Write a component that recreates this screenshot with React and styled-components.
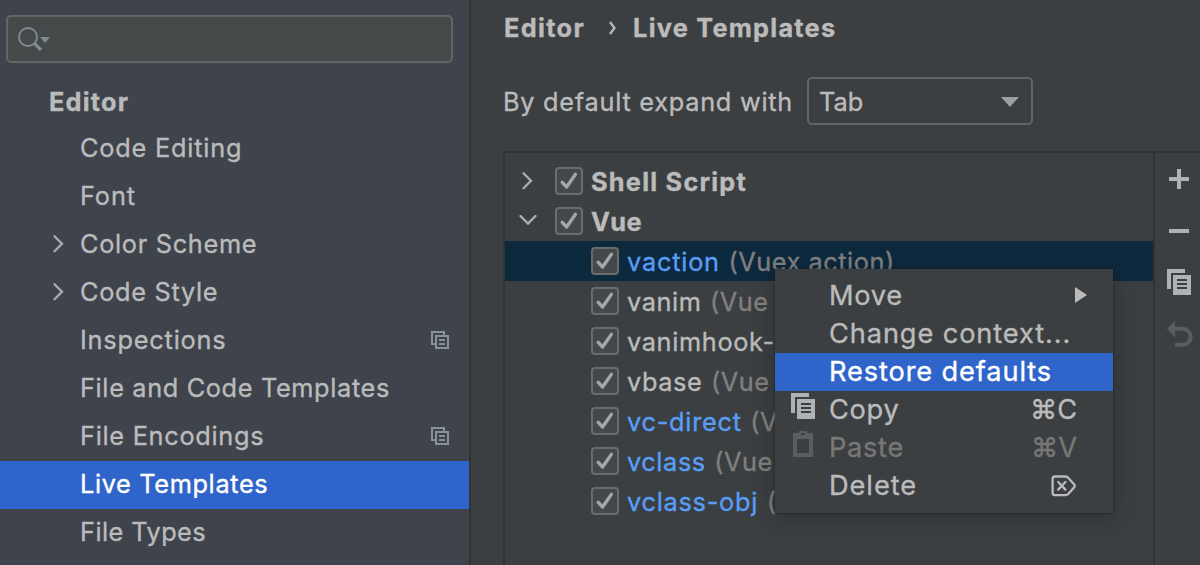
import React from "react";
import styled, { createGlobalStyle } from "styled-components";

const GlobalStyle = createGlobalStyle`
  * { box-sizing: border-box; }
  body {
    margin: 0;
    overflow: hidden;
    background: #3c3f41;
    color: #bbbbbb;
    font: 400 25.3px/1 Inter, "Liberation Sans", sans-serif;
    -webkit-text-stroke: 0.35px currentColor;
    white-space: nowrap;
  }
  svg { display: block; flex: none; }
`;

const Window = styled.div`
  display: flex;
  width: 1200px;
  height: 565px;
  overflow: hidden;
`;

const Sidebar = styled.aside`
  flex: none;
  width: 471px;
  background: #3f434c;
  border-right: 2px solid #323232;
  padding-top: 15px;
`;

const SearchField = styled.div`
  width: 447px;
  height: 48px;
  margin: 0 0 16px 6px;
  padding: 10px 0 0 10px;
  border: 2px solid #646464;
  border-radius: 5px;
  background: #45494a;
`;

const NavHeading = styled.div`
  height: 46px;
  padding-left: 49px;
  line-height: 46px;
  font-weight: 700;
  letter-spacing: 1.2px;
`;

const NavRow = styled.div`
  display: flex;
  align-items: center;
  height: 48px;
  padding: 0 20px 2px 52px;
  background: ${(p) => (p.$selected ? "#2f65ca" : "transparent")};
  color: ${(p) => (p.$selected ? "#ffffff" : "inherit")};
`;

const NavMarker = styled.span`
  width: 28px;
`;

const Label = styled.span`
  flex: ${(p) => (p.$grow ? 1 : "none")};
  line-height: 38px;
  letter-spacing: ${(p) => p.$track ?? 0.7}px;
`;

const Content = styled.main`
  flex: 1;
  min-width: 0;
  display: flex;
  flex-direction: column;
  padding-left: 32px;
`;

const Breadcrumb = styled.div`
  display: flex;
  align-items: center;
  height: 56px;
  padding-left: 1px;
  font-weight: 700;
`;

const CrumbArrow = styled.span`
  display: flex;
  width: 48px;
  padding-left: 23px;
`;

const ExpandRow = styled.div`
  display: flex;
  align-items: center;
  height: 48px;
  margin: 21px 0 26px;

  ${Label} { padding-top: 2px; }
`;

const Select = styled.div`
  display: flex;
  align-items: center;
  justify-content: space-between;
  width: 226px;
  height: 48px;
  margin-left: auto;
  margin-right: 167px;
  padding: 0 12px 0 10px;
  border: 2px solid #646464;
  border-radius: 5px;
`;

const SelectArrow = styled.svg`
  margin-top: 2px;
`;

const TemplatesPanel = styled.section`
  flex: 1;
  display: flex;
  border: 2px solid #323232;
  border-width: 2px 0 0 2px;
`;

const Tree = styled.div`
  width: 650px;
  padding-top: 8px;
  border-right: 2px solid #323232;
`;

const TreeRow = styled.div`
  display: flex;
  align-items: center;
  height: 40px;
  padding-left: ${(p) => (p.$child ? 86 : 14)}px;
  font-weight: ${(p) => (p.$child ? 400 : 700)};
  background: ${(p) => (p.$selected ? "#0d293e" : "transparent")};

  ${Label} { padding-top: 2px; }
`;

const TreeArrow = styled.span`
  width: 36px;
  padding-left: ${(p) => p.$inset || 0}px;
`;

const Checkbox = styled.span`
  flex: none;
  width: 28px;
  height: 28px;
  margin-right: 8px;
  border: 2px solid #6b6b6b;
  border-radius: 4px;
  background: #43494a;
`;

const TemplateName = styled(Label)`
  color: ${(p) => (p.$modified ? "#589df6" : "#bbbbbb")};
`;

const Description = styled(Label)`
  margin-left: 8.5px;
  color: #808080;
`;

const Toolbar = styled.div`
  display: flex;
  flex-direction: column;
  padding: 16px 0 0 12px;
`;

const ToolButton = styled.span`
  height: ${(p) => p.$height}px;
  padding-left: ${(p) => p.$inset || 0}px;
`;

const ContextMenu = styled.div`
  position: absolute;
  left: 775px;
  top: 269px;
  width: 338px;
  height: 244px;
  padding-top: 8px;
  background: #3c3f41;
  font-size: 27.2px;
  box-shadow: 0 0 2px rgba(0, 0, 0, 0.5), 0 5px 22px rgba(0, 0, 0, 0.25);
`;

const MenuItem = styled.div`
  display: flex;
  align-items: center;
  height: 38px;
  padding: 0 36px 0 16px;
  background: ${(p) => (p.$selected ? "#2f65ca" : "transparent")};
  color: ${(p) => (p.$selected ? "#ffffff" : p.$disabled ? "#777777" : "inherit")};
`;

const MenuIcon = styled.span`
  width: 38px;
  height: 34px;
`;

const SubmenuArrow = styled.svg`
  margin-right: -10px;
`;

const Chevron = ({ down }) => (
  <svg width={down ? 18 : 12} height={down ? 14 : 18} fill="none" stroke="#adadad" strokeWidth="2.3" strokeLinecap="round">
    <path d={down ? "M1.5 2 9 9.5 16.5 2" : "M2.5 1.2 10 8.7 2.5 16.2"} />
  </svg>
);

const CopyIcon = () => (
  <svg width="24" height="26" fill="#afb1b3">
    <path d="M0 0H18V4H4V20H0Z" />
    <path fillRule="evenodd" d="M6 6H24V26H6ZM10 10V12H20V10ZM10 14V16H20V14ZM10 18V20H20V18Z" />
  </svg>
);

const PasteIcon = () => (
  <svg width="22" height="26" fill="#5c5d5e">
    <path fillRule="evenodd" d="M2 2H8V0H16V2H22V26H2ZM10 2V4H14V2ZM6 8V22H18V8Z" />
  </svg>
);

const ProjectIcon = () => (
  <svg width="18" height="18" fill="none" stroke="#87939a" strokeWidth="2">
    <path d="M13 4V1H1V13H4M5 5H17V17H5ZM8 9H14M8 13H14" />
  </svg>
);

const SearchIcon = () => (
  <svg width="34" height="26" fill="none" stroke="#7d8b94">
    <circle cx="10" cy="10" r="9" strokeWidth="1.9" />
    <path d="M16.3 16.3 23 23" strokeWidth="3.2" />
    <path d="M22 10H32L27 16Z" fill="#7d8b94" stroke="none" />
  </svg>
);

const Check = () => (
  <Checkbox>
    <svg width="24" height="24" fill="none" stroke="#a7a7a7" strokeWidth="3.4" strokeLinecap="round" strokeLinejoin="round">
      <path d="M5.2 13.3 9.6 18 18.4 5.4" />
    </svg>
  </Checkbox>
);

const PlusIcon = () => (
  <svg width="20" height="20" fill="#afb1b3"><path d="M8 0H12V8H20V12H12V20H8V12H0V8H8Z" /></svg>
);

const MinusIcon = () => (
  <svg width="20" height="4" fill="#afb1b3"><path d="M0 0H20V4H0Z" /></svg>
);

const UndoIcon = () => (
  <svg width="27" height="27">
    <path d="M0 8 8 0V16Z" fill="#5a5c5e" />
    <path d="M7 7.7H15.7A8 8 0 0 1 15.7 23.7H8" fill="none" stroke="#5a5c5e" strokeWidth="4" />
  </svg>
);

const DeleteKeyIcon = () => (
  <svg width="26" height="22" fill="none" stroke="#bbbbbb" strokeWidth="2.3" strokeLinejoin="round" strokeLinecap="round">
    <path d="M4 1.5H14.5Q16.2 1.5 17.2 2.8L23.2 9.4Q24.3 10.8 23.2 12.2L17.2 19Q16.2 20.1 14.5 20.1H4Q1.6 20.1 1.6 17.7V3.9Q1.6 1.5 4 1.5Z" />
    <path d="M7.2 7 14.4 14.6M14.4 7 7.2 14.6" />
  </svg>
);

const navItems = [
  { name: "Code Editing", track: 0.8 },
  { name: "Font", track: 0.9 },
  { name: "Color Scheme", track: 0.7, group: true },
  { name: "Code Style", track: 0.7, group: true },
  { name: "Inspections", track: 0.8, project: true },
  { name: "File and Code Templates", track: 0.65 },
  { name: "File Encodings", track: 0.72, project: true },
  { name: "Live Templates", track: 0.65, selected: true },
  { name: "File Types", track: 0.45 },
];

const templates = [
  { name: "vaction", track: 0.8, description: "(Vuex action)", modified: true, selected: true },
  { name: "vanim", track: 0.6, description: "(Vue" },
  { name: "vanimhook-", track: 0.65 },
  { name: "vbase", track: 0.6, description: "(Vue" },
  { name: "vc-direct", track: 0.75, description: "(Vue", modified: true },
  { name: "vclass", track: 0.6, description: "(Vue", modified: true },
  { name: "vclass-obj", track: 0.75, description: "(Vue", modified: true },
];

export default function App() {
  return (
    <>
      <GlobalStyle />
      <Window>
        <Sidebar>
          <SearchField><SearchIcon /></SearchField>
          <NavHeading>Editor</NavHeading>
          {navItems.map((item) => (
            <NavRow key={item.name} $selected={item.selected}>
              <NavMarker>{item.group && <Chevron />}</NavMarker>
              <Label $grow $track={item.track}>{item.name}</Label>
              {item.project && <ProjectIcon />}
            </NavRow>
          ))}
        </Sidebar>
        <Content>
          <Breadcrumb>
            <Label $track={1.35}>Editor</Label>
            <CrumbArrow>
              <svg width="10" height="14" fill="none" stroke="#bbbbbb" strokeWidth="2.2"><path d="M2 1 6.5 7 2 13" /></svg>
            </CrumbArrow>
            <Label $track={1.25}>Live Templates</Label>
          </Breadcrumb>
          <ExpandRow>
            <Label $track={0.74}>By default expand with</Label>
            <Select>
              <Label $track={0}>Tab</Label>
              <SelectArrow width="18" height="10" fill="#9da0a3"><path d="M0 0H18L9 10Z" /></SelectArrow>
            </Select>
          </ExpandRow>
          <TemplatesPanel>
            <Tree>
              <TreeRow>
                <TreeArrow $inset={2}><Chevron /></TreeArrow>
                <Check />
                <Label $track={1.25}>Shell Script</Label>
              </TreeRow>
              <TreeRow>
                <TreeArrow><Chevron down /></TreeArrow>
                <Check />
                <Label $track={0.4}>Vue</Label>
              </TreeRow>
              {templates.map((t) => (
                <TreeRow key={t.name} $child $selected={t.selected}>
                  <Check />
                  <TemplateName $modified={t.modified} $track={t.track}>{t.name}</TemplateName>
                  {t.description && <Description $track={0.55}>{t.description}</Description>}
                </TreeRow>
              ))}
            </Tree>
            <Toolbar>
              <ToolButton $height={60} $inset={2}><PlusIcon /></ToolButton>
              <ToolButton $height={40} $inset={2}><MinusIcon /></ToolButton>
              <ToolButton $height={52}><CopyIcon /></ToolButton>
              <ToolButton $height={27}><UndoIcon /></ToolButton>
            </Toolbar>
          </TemplatesPanel>
        </Content>
      </Window>
      <ContextMenu>
        <MenuItem>
          <MenuIcon />
          <Label $grow>Move</Label>
          <SubmenuArrow width="12" height="18" fill="#bbbbbb"><path d="M0 0 12 8 0 16Z" /></SubmenuArrow>
        </MenuItem>
        <MenuItem><MenuIcon /><Label $grow $track={0.9}>Change context...</Label></MenuItem>
        <MenuItem $selected><MenuIcon /><Label $grow $track={0.88}>Restore defaults</Label></MenuItem>
        <MenuItem>
          <MenuIcon><CopyIcon /></MenuIcon>
          <Label $grow>Copy</Label>
          <Label $track={0}>⌘C</Label>
        </MenuItem>
        <MenuItem $disabled>
          <MenuIcon><PasteIcon /></MenuIcon>
          <Label $grow>Paste</Label>
          <Label $track={0}>⌘V</Label>
        </MenuItem>
        <MenuItem>
          <MenuIcon />
          <Label $grow $track={0.95}>Delete</Label>
          <DeleteKeyIcon />
        </MenuItem>
      </ContextMenu>
    </>
  );
}
